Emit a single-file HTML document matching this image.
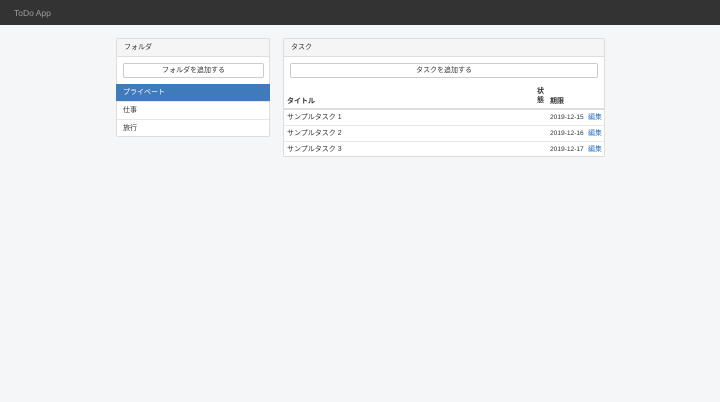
<!DOCTYPE html><html><head><meta charset="utf-8"><style>
*{box-sizing:border-box;margin:0;padding:0}
body{width:720px;height:402px;background:#f5f6f8;font-family:"Liberation Sans","Noto Sans CJK JP",sans-serif;font-size:7px;color:#333;position:relative;overflow:hidden}
.a{position:absolute}
.t{line-height:9px;height:9px;white-space:nowrap}
.nav{left:0;top:0;width:720px;height:25px;background:#333}
.panel{background:#fff;border:1px solid #ddd;border-radius:2px}
.hd{background:#f5f5f5;border-bottom:1px solid #ddd;height:18px;line-height:17px;padding-left:7px}
.btn{border:1px solid #ccc;border-radius:2px;background:#fff;text-align:center;line-height:13px;height:15px}
.row{border-top:1px solid #e6e6e6}
.d{font-size:6.6px}
</style></head><body>
<div class="a nav"></div>
<div class="a" style="left:14px;top:8px;font-size:8.5px;color:#9d9d9d">ToDo App</div>

<div class="a panel" style="left:116px;top:38px;width:154px;height:99px">
<div class="hd">フォルダ</div>
<div class="a btn" style="left:6px;top:24px;width:141px">フォルダを追加する</div>
<div class="a" style="left:-1px;top:45px;width:154px;height:17px;background:#3f7abb;color:#fff;line-height:17px;padding-left:7px">プライベート</div>
<div class="a row" style="left:0;top:62px;width:152px;height:18px;line-height:17px;padding-left:6px">仕事</div>
<div class="a row" style="left:0;top:80px;width:152px;height:18px;line-height:17px;padding-left:6px">旅行</div>
</div>

<div class="a panel" style="left:283px;top:38px;width:322px;height:119px">
<div class="hd">タスク</div>
<div class="a btn" style="left:6px;top:24px;width:308px">タスクを追加する</div>
<div class="a t" style="left:3px;top:58px;font-weight:bold">タイトル</div>
<div class="a" style="left:253px;top:48px;font-weight:bold;line-height:9px">状<br>態</div>
<div class="a t" style="left:266px;top:58px;font-weight:bold">期限</div>
<div class="a" style="left:0;top:69px;width:320px;border-top:2px solid #ddd"></div>
<div class="a t" style="left:3px;top:74px">サンプルタスク 1</div><div class="a t d" style="left:266px;top:74px">2019-12-15</div><div class="a t" style="left:304px;top:74px;color:#337ab7">編集</div>
<div class="a row" style="left:0;top:86px;width:320px"></div>
<div class="a t" style="left:3px;top:90px">サンプルタスク 2</div><div class="a t d" style="left:266px;top:90px">2019-12-16</div><div class="a t" style="left:304px;top:90px;color:#337ab7">編集</div>
<div class="a row" style="left:0;top:102px;width:320px"></div>
<div class="a t" style="left:3px;top:106px">サンプルタスク 3</div><div class="a t d" style="left:266px;top:106px">2019-12-17</div><div class="a t" style="left:304px;top:106px;color:#337ab7">編集</div>
</div>
</body></html>
